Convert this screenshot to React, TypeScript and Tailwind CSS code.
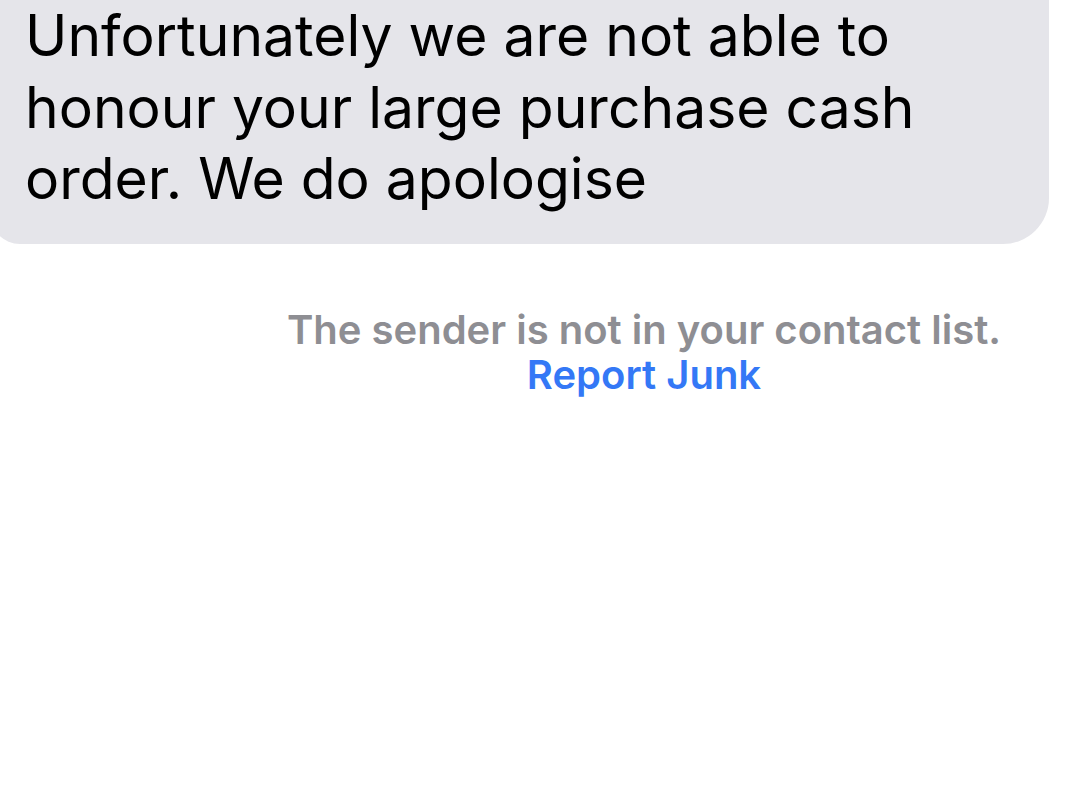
export default function App() {
  return (
    <div className="w-[1080px] h-[808px] bg-white overflow-hidden relative" style={{ fontFamily: "Inter, 'Noto Sans', sans-serif" }}>
      <div className="relative -mt-[60px] w-[1049px]">
        <div className="bg-[#e5e5ea] rounded-br-[46px] rounded-bl-[30px] pt-[60px] pb-[29px] -ml-[10px] pl-[35px]">
          <p className="text-[57px] leading-[71.5px] text-black">
            Unfortunately we are not able to<br />
            honour your large purchase cash<br />
            order. We do apologise
          </p>
        </div>
      </div>
      <div className="flex flex-col items-center pl-[208px] mt-[63px] font-semibold text-[40px] leading-[45px]">
        <span className="text-[#8e8e93]">The sender is not in your contact list.</span>
        <span className="text-[#3478f6]">Report Junk</span>
      </div>
    </div>
  );
}
